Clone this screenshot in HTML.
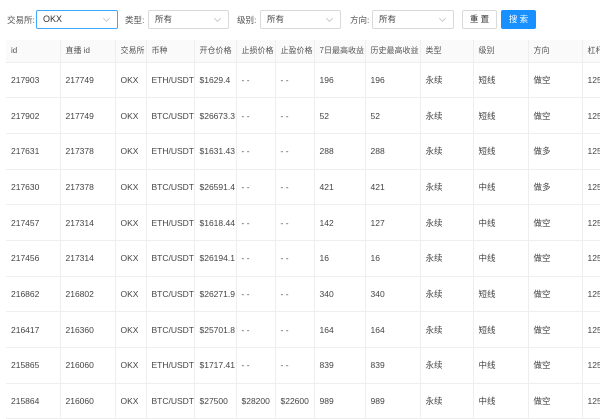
<!DOCTYPE html>
<html><head><meta charset="utf-8"><style>
*{margin:0;padding:0;box-sizing:border-box}
body{width:600px;height:416px;overflow:hidden;background:#fff;font-family:"Liberation Sans","Noto Sans CJK SC",sans-serif;font-size:8.5px;color:#444;position:relative}
.lbl{position:absolute;top:14px;font-size:8.5px;color:#555}
.sel{position:absolute;top:10px;height:19px;border:1px solid #d9d9d9;border-radius:2px;padding:0 0 0 6px;line-height:17px;color:#444}
.sel:after{content:"";position:absolute;right:8px;top:5px;width:4px;height:4px;border-right:1px solid #ccc;border-bottom:1px solid #ccc;transform:rotate(45deg)}
.btn{position:absolute;top:10px;height:19px;border-radius:2px;text-align:center;line-height:17px;font-size:8.5px}
table{position:absolute;left:6px;top:40px;border-collapse:collapse;table-layout:fixed;width:620px}
td,th{border-right:1px solid #eee;border-bottom:1px solid #eee;text-align:left;padding-left:5px;font-weight:normal;white-space:nowrap;overflow:hidden}
th{background:#fafafa;height:22px;color:#555;font-size:8px}
td{height:35.7px}
</style></head><body>
<div class="lbl" style="left:7px">交易所:</div>
<div class="sel" style="left:36px;width:82px;border-color:#40a9ff;font-size:9px;color:#333">OKX</div>
<div class="lbl" style="left:125px">类型:</div>
<div class="sel" style="left:148px;width:81px">所有</div>
<div class="lbl" style="left:237px">级别:</div>
<div class="sel" style="left:260px;width:81px">所有</div>
<div class="lbl" style="left:350px">方向:</div>
<div class="sel" style="left:372px;width:82px">所有</div>
<div class="btn" style="left:462px;width:35px;border:1px solid #d9d9d9;color:#333">重 置</div>
<div class="btn" style="left:501px;width:35px;background:#1890ff;border:1px solid #1890ff;color:#fff">搜 索</div>
<table>
<colgroup><col style="width:54px"><col style="width:55px"><col style="width:31px"><col style="width:48px"><col style="width:42px"><col style="width:39px"><col style="width:39px"><col style="width:51px"><col style="width:55px"><col style="width:53px"><col style="width:55px"><col style="width:54px"><col style="width:44px"></colgroup>
<tr><th>id</th><th>直播 id</th><th>交易所</th><th>币种</th><th>开仓价格</th><th>止损价格</th><th>止盈价格</th><th>7日最高收益</th><th>历史最高收益</th><th>类型</th><th>级别</th><th>方向</th><th>杠杆</th></tr>
<tr><td>217903</td><td>217749</td><td>OKX</td><td>ETH/USDT</td><td>$1629.4</td><td>- -</td><td>- -</td><td>196</td><td>196</td><td>永续</td><td>短线</td><td>做空</td><td>125</td></tr>
<tr><td>217902</td><td>217749</td><td>OKX</td><td>BTC/USDT</td><td>$26673.3</td><td>- -</td><td>- -</td><td>52</td><td>52</td><td>永续</td><td>短线</td><td>做空</td><td>125</td></tr>
<tr><td>217631</td><td>217378</td><td>OKX</td><td>ETH/USDT</td><td>$1631.43</td><td>- -</td><td>- -</td><td>288</td><td>288</td><td>永续</td><td>短线</td><td>做多</td><td>125</td></tr>
<tr><td>217630</td><td>217378</td><td>OKX</td><td>BTC/USDT</td><td>$26591.4</td><td>- -</td><td>- -</td><td>421</td><td>421</td><td>永续</td><td>中线</td><td>做多</td><td>125</td></tr>
<tr><td>217457</td><td>217314</td><td>OKX</td><td>ETH/USDT</td><td>$1618.44</td><td>- -</td><td>- -</td><td>142</td><td>127</td><td>永续</td><td>中线</td><td>做空</td><td>125</td></tr>
<tr><td>217456</td><td>217314</td><td>OKX</td><td>BTC/USDT</td><td>$26194.1</td><td>- -</td><td>- -</td><td>16</td><td>16</td><td>永续</td><td>中线</td><td>做空</td><td>125</td></tr>
<tr><td>216862</td><td>216802</td><td>OKX</td><td>BTC/USDT</td><td>$26271.9</td><td>- -</td><td>- -</td><td>340</td><td>340</td><td>永续</td><td>短线</td><td>做空</td><td>125</td></tr>
<tr><td>216417</td><td>216360</td><td>OKX</td><td>BTC/USDT</td><td>$25701.8</td><td>- -</td><td>- -</td><td>164</td><td>164</td><td>永续</td><td>短线</td><td>做空</td><td>125</td></tr>
<tr><td>215865</td><td>216060</td><td>OKX</td><td>ETH/USDT</td><td>$1717.41</td><td>- -</td><td>- -</td><td>839</td><td>839</td><td>永续</td><td>中线</td><td>做空</td><td>125</td></tr>
<tr><td>215864</td><td>216060</td><td>OKX</td><td>BTC/USDT</td><td>$27500</td><td>$28200</td><td>$22600</td><td>989</td><td>989</td><td>永续</td><td>中线</td><td>做空</td><td>125</td></tr>
</table>
</body></html>
